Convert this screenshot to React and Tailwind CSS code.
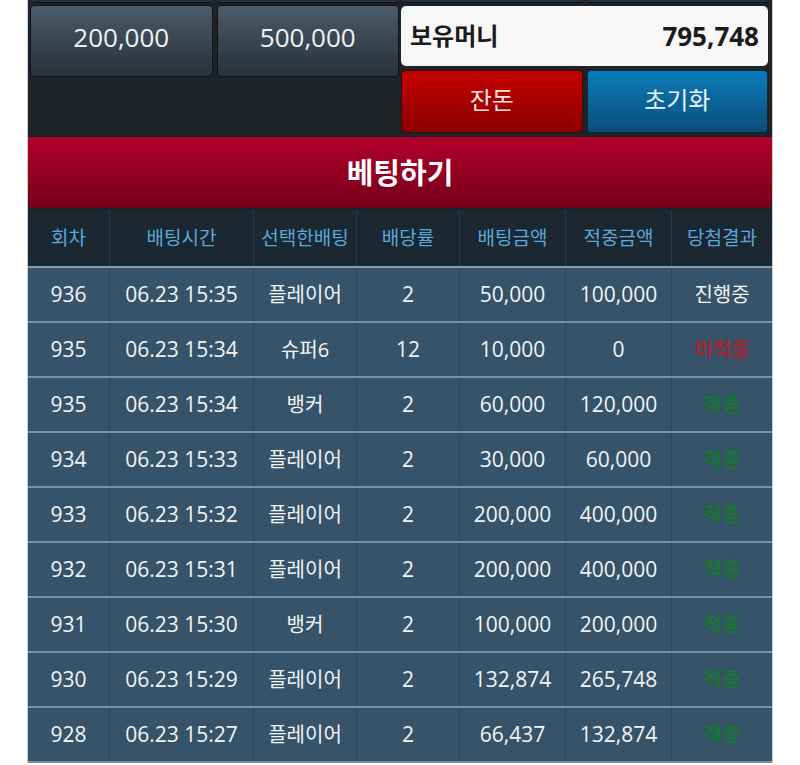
import React from 'react'

const font = { fontFamily: '"Open Sans", "Noto Sans CJK KR", sans-serif' }

const rows = [
  ['936', '06.23 15:35', '플레이어', '2', '50,000', '100,000', '진행중'],
  ['935', '06.23 15:34', '슈퍼6', '12', '10,000', '0', '미적중'],
  ['935', '06.23 15:34', '뱅커', '2', '60,000', '120,000', '적중'],
  ['934', '06.23 15:33', '플레이어', '2', '30,000', '60,000', '적중'],
  ['933', '06.23 15:32', '플레이어', '2', '200,000', '400,000', '적중'],
  ['932', '06.23 15:31', '플레이어', '2', '200,000', '400,000', '적중'],
  ['931', '06.23 15:30', '뱅커', '2', '100,000', '200,000', '적중'],
  ['930', '06.23 15:29', '플레이어', '2', '132,874', '265,748', '적중'],
  ['928', '06.23 15:27', '플레이어', '2', '66,437', '132,874', '적중'],
]

const headers = ['회차', '배팅시간', '선택한배팅', '배당률', '배팅금액', '적중금액', '당첨결과']
const widths = ['w-[82px]', 'w-[144px]', 'w-[103px]', 'w-[103px]', 'w-[106px]', 'w-[106px]', 'flex-1']

function cellClass(i, c) {
  if (i === 6) {
    if (c === '미적중') return 'text-[20px] text-[#b3202c] [text-shadow:0_0_2px_rgba(179,32,44,0.8)]'
    if (c === '적중') return 'text-[20px] text-[#177a2c] [text-shadow:0_0_2px_rgba(23,122,44,0.8)]'
    return 'text-[20px] text-[#f2f4f6]'
  }
  if (i === 2) return 'text-[20px] text-[#f2f4f6]'
  return 'text-[21px] text-[#f2f4f6]'
}

function AmountButton({ label }) {
  return (
    <button className="flex h-[72px] items-center justify-center rounded-[4px] border border-[#101417] bg-gradient-to-b from-[#4b5b69] to-[#28323a] pb-[8px] text-[26px] text-[#eef1f3]">
      {label}
    </button>
  )
}

export default function App() {
  return (
    <div className="min-h-screen bg-white" style={font}>
      <div className="mx-auto w-[746px] border-x border-[#c5d2dc]">
        <div className="bg-[#1e2327]">
          <div className="flex h-[3px]">
            <div className="flex w-[371px] gap-[4px] pl-[2px]">
              <div className="flex-1 rounded-b-[3px] border-b border-[#0e1113] bg-[#262f36]" />
              <div className="flex-1 rounded-b-[3px] border-b border-[#0e1113] bg-[#262f36]" />
            </div>
            <div className="flex flex-1 gap-[4px] pl-[2px] pr-[4px]">
              <div className="flex-1 rounded-b-[3px] border-b border-[#0e1113] bg-[#262f36]" />
              <div className="flex-1 rounded-b-[3px] border-b border-[#0e1113] bg-[#262f36]" />
            </div>
          </div>
          <div className="flex pt-[2px] pb-[4px]">
            <div className="w-[371px] pl-[2px]">
              <div className="grid grid-cols-2 gap-[4px]">
                <AmountButton label="200,000" />
                <AmountButton label="500,000" />
              </div>
            </div>
            <div className="flex-1 pl-[2px] pr-[4px]">
              <div className="mt-[1px] flex h-[60px] items-center justify-between rounded-[5px] bg-[#f7f7f8] px-[9px] font-bold text-[#1b1b1b]">
                <span className="text-[24px]">보유머니</span>
                <span className="text-[26px]">795,748</span>
              </div>
              <div className="mt-[4px] grid grid-cols-2 gap-[4px]">
                <button className="flex h-[63px] items-center justify-center rounded-[4px] border border-[#3a0a0a] bg-gradient-to-b from-[#c50000] to-[#8c0000] pb-[3px] text-[24px] text-[#fbe3e3]">
                  잔돈
                </button>
                <button className="flex h-[63px] items-center justify-center rounded-[4px] border border-[#0b2a3d] bg-gradient-to-b from-[#0a7cba] to-[#0b4d7a] pb-[3px] text-[24px] text-[#e8f3fa]">
                  초기화
                </button>
              </div>
            </div>
          </div>
          <div className="flex h-[71px] items-center justify-center rounded-b-[4px] bg-gradient-to-b from-[#b2002a] to-[#75001a] text-[29px] font-bold text-white">
            베팅하기
          </div>
          <div className="h-[2px]" />
        </div>

        <div className="flex h-[58px] border-b-2 border-[#7c9fb8] bg-[#1b2731]">
          {headers.map((h, i) => (
            <div
              key={h}
              className={`${widths[i]} flex items-center justify-center text-[19px] text-[#5ba8dc] ${i < 6 ? 'border-r border-[#2b3a47]' : ''}`}
            >
              {h}
            </div>
          ))}
        </div>

        {rows.map((r, ri) => (
          <div key={ri} className="flex h-[55px] border-b-2 border-[#6f93ad] bg-[#36536a]">
            {r.map((c, i) => (
              <div
                key={i}
                className={`${widths[i]} flex items-center justify-center ${cellClass(i, c)} ${i < 6 ? 'border-r border-[#2c4457]' : ''}`}
              >
                {c}
              </div>
            ))}
          </div>
        ))}
      </div>
    </div>
  )
}
